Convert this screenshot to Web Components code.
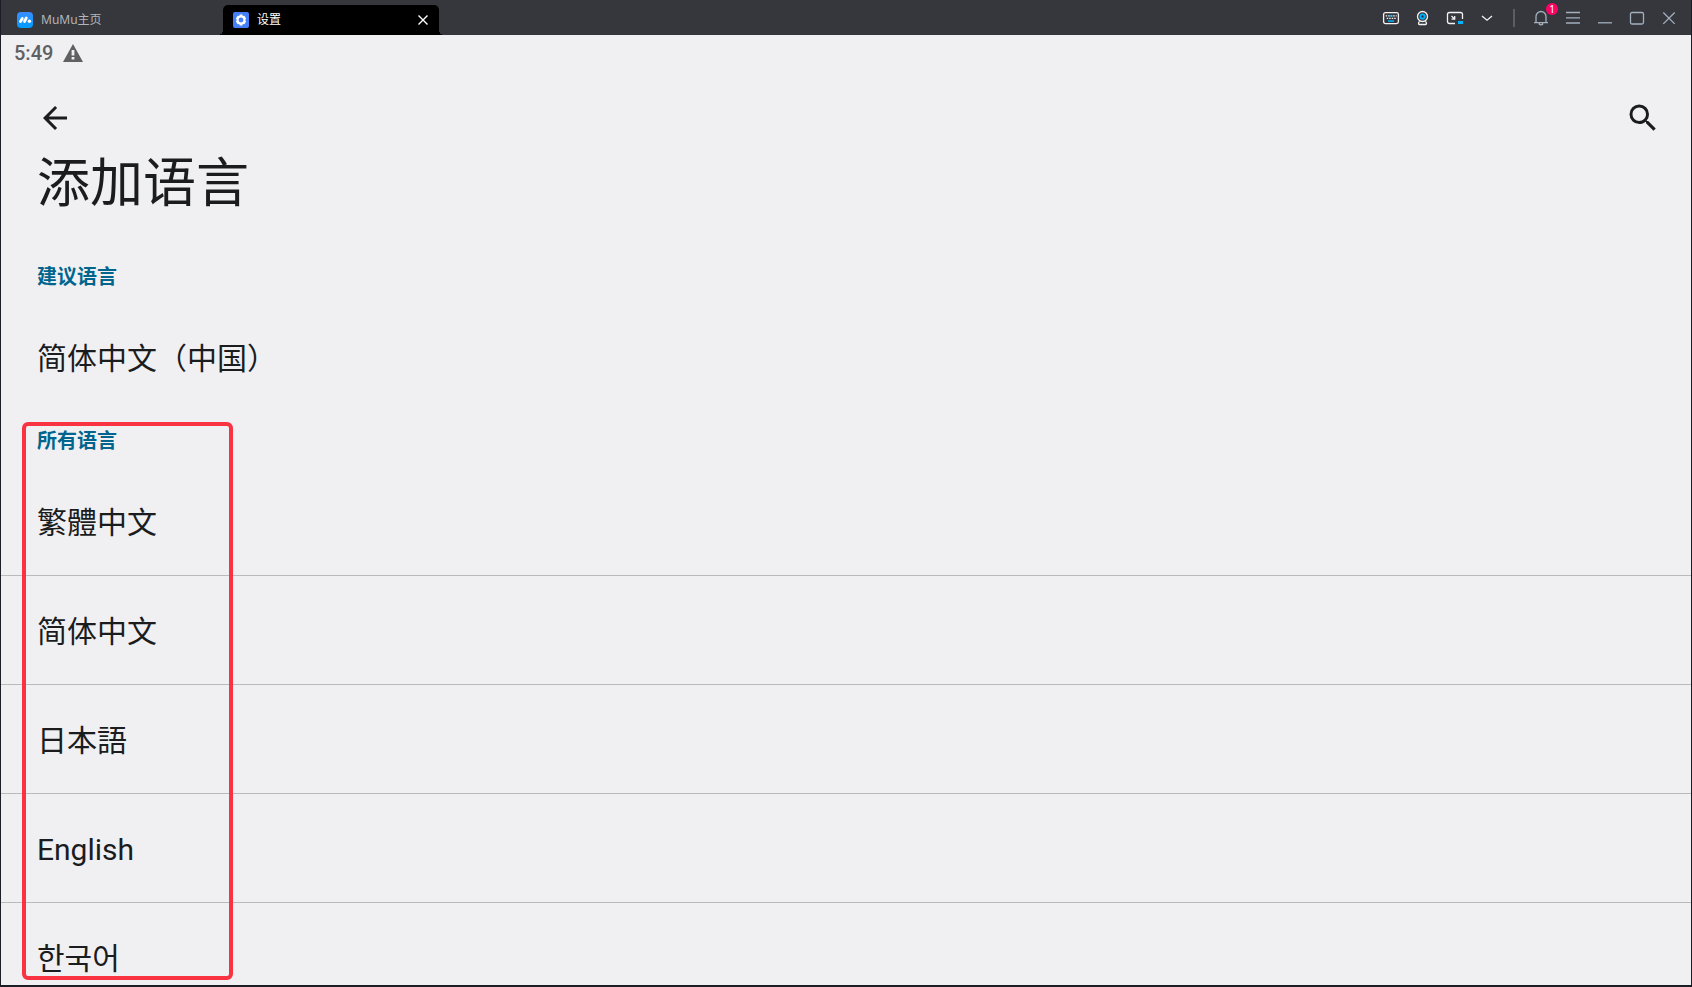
<!DOCTYPE html>
<html lang="zh-CN">
<head>
<meta charset="utf-8">
<title>添加语言</title>
<style>
html, body { margin: 0; height: 100%; }
body { background: #1b1e26; font-family: Roboto, "Noto Sans CJK SC", sans-serif; overflow: hidden; }
</style>
</head>
<body>
<emulator-window>
  <title-bar slot="bar">
    <window-tab>
      <svg slot="icon" width="16" height="16" viewBox="0 0 16 16"><defs><linearGradient id="g" x1="0" y1="0" x2="0" y2="1"><stop offset="0" stop-color="#3a8cff"/><stop offset="1" stop-color="#009dff"/></linearGradient></defs><rect width="16" height="16" rx="4" fill="url(#g)"/><g stroke="#fff" stroke-width="2.8" stroke-linecap="round"><path d="M3.5 9.5 5.3 6.5M7.5 9.5 9.3 6"/></g><circle cx="12.4" cy="9.3" r="1.7" fill="#fff"/></svg>
      MuMu主页
    </window-tab>
    <window-tab active>
      <svg slot="icon" width="16" height="16" viewBox="0 0 16 16"><rect width="16" height="16" rx="2" fill="#4680f8"/><path fill="#fff" fill-rule="evenodd" d="M6.7 2.5h2.6l.5 1.6 1.6-.3 1.7 2.6L12.200 8l.9 1.600-1.700 2.600-1.600-.3-.5 1.600H6.700l-.5-1.600-1.600.3L2.900 9.600 3.800 8l-.9-1.600 1.700-2.600 1.600.3zM8 5.600a2.400 2.400 0 1 0 0 4.800 2.400 2.400 0 0 0 0-4.800z"/></svg>
      设置
    </window-tab>
  </title-bar>
  <status-bar slot="app">5:49</status-bar>
  <app-header slot="app">添加语言</app-header>
  <language-group slot="app">
    <span slot="heading">建议语言</span>
    <language-item plain>简体中文（中国）</language-item>
  </language-group>
  <language-group slot="app" marked>
    <span slot="heading">所有语言</span>
    <language-item lang="zh-TW">繁體中文</language-item>
    <language-item>简体中文</language-item>
    <language-item lang="ja">日本語</language-item>
    <language-item lang="en">English</language-item>
    <language-item lang="ko">한국어</language-item>
  </language-group>
</emulator-window>
<script>
const define = (name, html) => customElements.define(name, class extends HTMLElement {
  constructor() {
    super();
    this.attachShadow({ mode: 'open' }).innerHTML = html;
  }
});

define('emulator-window', `
<style>
:host { display: flex; flex-direction: column; height: 100vh; box-sizing: border-box; border: solid #1b1e26; border-width: 0 1px 2px; }
main { flex: 1; min-height: 0; overflow: hidden; background: #f0f0f3; color: #1b1c1e; }
</style>
<slot name="bar"></slot><main><slot name="app"></slot></main>`);

define('title-bar', `
<style>
:host { display: flex; height: 35px; background: #36373d; padding: 0 6px; }
nav { display: flex; align-items: flex-end; }
.tools { margin-left: auto; display: flex; align-items: stretch; }
button { all: unset; position: relative; width: 32px; height: 35px; display: grid; place-items: center; cursor: pointer; }
svg { display: block; fill: none; stroke: #a3afbd; stroke-width: 1.3; }
.light svg { stroke: #f2f2f3; }
.sep { width: 2px; height: 18px; margin: 9px 10px 0; background: #5c5d63; }
.badge { position: absolute; left: 21px; top: 3px; width: 12px; height: 12px; border-radius: 6px; background: #ff0066; color: #fff; font: 10px/12px "Noto Sans", sans-serif; text-align: center; }
</style>
<nav aria-label="标签"><slot></slot></nav>
<div class="tools">
<button class="light" aria-label="键盘"><svg width="18" height="18" viewBox="0 0 18 18"><rect x="1.600" y="3.600" width="14.800" height="11" rx="1.800"/><path stroke-dasharray="1.500 1" d="M3.700 6.800h11M4.700 9.300h9"/><path stroke="#00b4ff" d="M7.500 6.800h3M6 12h6"/></svg></button>
<button class="light" aria-label="摄像头"><svg width="18" height="18" viewBox="0 0 18 18"><circle cx="8.500" cy="7.500" r="5"/><circle cx="8.500" cy="7.500" r="2.200" stroke="#00b4ff" stroke-width="1.800"/><path d="M5.500 12.300 4.600 14q-.3 1.500 1 1.500h5.800q1.300 0 1-1.500l-.9-1.700"/></svg></button>
<button class="light" aria-label="小窗"><svg width="18" height="18" viewBox="0 0 18 18"><path d="M9 14.500H3.500q-2 0-2-2V5.500q0-2 2-2h11q2 0 2 2V10M5.500 7l3 3M8.700 7v3.200H5.500"/><path fill="#00b4ff" stroke="none" d="M12 12h5v3h-5z"/></svg></button>
<button class="light" aria-label="展开"><svg width="18" height="18" viewBox="0 0 18 18"><path d="m4 7 5 4.200L14 7"/></svg></button>
<span class="sep"></span>
<button aria-label="通知"><svg width="18" height="18" viewBox="0 0 18 18"><path d="M2 13.700h14M4 13.700V7.500a5 5 0 0 1 10 0v6.200M6.800 14.500q2.200 2.600 4.400 0"/></svg><span class="badge">1</span></button>
<button aria-label="菜单"><svg width="18" height="18" viewBox="0 0 18 18"><path d="M2 3.500h14M2 8.800h14M2 14h14"/></svg></button>
<button aria-label="最小化"><svg width="18" height="18" viewBox="0 0 18 18"><path d="M2 13.800h14"/></svg></button>
<button aria-label="最大化"><svg width="18" height="18" viewBox="0 0 18 18"><rect x="2.500" y="3.500" width="13" height="11.500" rx="1.500"/></svg></button>
<button aria-label="关闭"><svg width="18" height="18" viewBox="0 0 18 18"><path d="m3.300 3.500 11.400 11.400M14.700 3.500 3.300 14.900"/></svg></button>
</div>`);

define('window-tab', `
<style>
:host { display: flex; align-items: center; gap: 8px; width: 216px; height: 30px; box-sizing: border-box; padding: 0 10px; color: #b4b5b9; font: 12px/16px "Noto Sans", "Noto Sans CJK SC", sans-serif; position: relative; }
:host([active]) { background: #000; color: #fff; border-radius: 5px 5px 0 0; }
:host([active])::before, :host([active])::after { content: ""; position: absolute; bottom: 0; width: 5px; height: 5px; }
:host([active])::before { left: -5px; background: radial-gradient(circle at 0 0, transparent 5px, #000 5px); }
:host([active])::after { right: -5px; background: radial-gradient(circle at 100% 0, transparent 5px, #000 5px); }
::slotted(svg) { display: block; }
a { color: inherit; text-decoration: none; flex: 1; }
button { all: unset; display: none; cursor: pointer; }
:host([active]) button { display: block; }
svg { display: block; }
</style>
<slot name="icon"></slot><a href="#"><slot></slot></a>
<button aria-label="关闭标签"><svg width="12" height="12" viewBox="0 0 12 12" stroke="#fff" stroke-width="1.400"><path d="m1.500 1.500 9 9M10.500 1.500l-9 9"/></svg></button>`);

define('status-bar', `
<style>
:host { display: flex; align-items: center; gap: 10px; height: 36px; margin-bottom: 1px; padding: 0 13px; color: #606062; font-size: 20px; line-height: 24px; font-weight: 500; }
svg { display: block; }
</style>
<slot></slot><svg width="20" height="18" viewBox="0 0 20 18"><path fill="#606062" fill-rule="evenodd" d="M10 0 20 18H0zM8.600 6v5.500h2.800V6zM8.600 13v2.500h2.800V13z"/></svg>`);

define('app-header', `
<style>
:host { display: block; padding: 28px 30px 32px 36px; }
.row { display: flex; justify-content: space-between; }
button { all: unset; display: block; cursor: pointer; }
svg { display: block; fill: currentColor; }
h1 { margin: 16px 0 0; font-size: 53px; line-height: 64px; font-weight: 400; }
</style>
<div class="row">
<button aria-label="返回"><svg width="36" height="36" viewBox="0 0 24 24"><path d="M20 11H7.830l5.590-5.590L12 4l-8 8 8 8 1.410-1.410L7.830 13H20v-2z"/></svg></button>
<button aria-label="搜索"><svg width="36" height="36" viewBox="0 0 24 24"><path d="M15.500 14h-.79l-.28-.27A6.471 6.471 0 0 0 16 9.500 6.500 6.500 0 1 0 9.500 16c1.610 0 3.090-.59 4.230-1.570l.27.28v.79l5 4.990L20.490 19l-4.990-5zm-6 0C7.010 14 5 11.990 5 9.500S7.010 5 9.500 5 14 7.010 14 9.500 11.990 14 9.500 14z"/></svg></button>
</div>
<h1><slot></slot></h1>`);

define('language-group', `
<style>
:host { display: block; position: relative; }
h2 { margin: 0; padding: 15px 36px 12px; font-size: 20px; line-height: 28px; font-weight: 700; color: #00658d; }
.mark { display: none; }
:host([marked]) .mark { display: block; position: absolute; pointer-events: none; left: 21px; top: 10px; width: 211px; height: 558px; box-sizing: border-box; border: 4px solid #f93342; border-radius: 6px; }
</style>
<h2><slot name="heading"></slot></h2>
<div role="list"><slot></slot></div>
<div class="mark"></div>`);

define('language-item', `
<style>
:host { display: block; border-bottom: 1px solid #b9babc; }
:host([plain]) { border-color: transparent; }
:host(:lang(zh-TW)) { font-family: Roboto, "Noto Sans CJK TC", sans-serif; }
:host(:lang(ja)) { font-family: Roboto, "Noto Sans CJK JP", sans-serif; }
:host(:lang(ko)) { font-family: Roboto, "Noto Sans CJK KR", sans-serif; }
button { all: unset; display: block; width: 100%; box-sizing: border-box; padding: 34px 36px 30px; font-size: 30px; line-height: 44px; cursor: pointer; }
</style>
<button><slot></slot></button>`);
</script>
</body>
</html>
